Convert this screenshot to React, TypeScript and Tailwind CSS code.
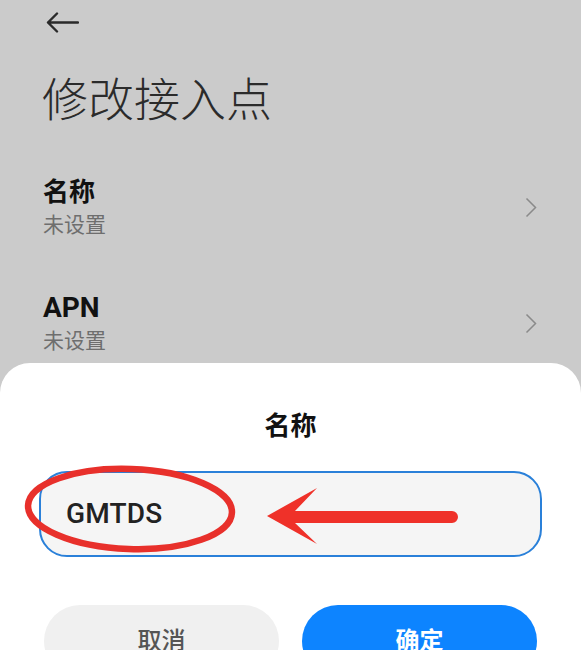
import React from "react";

const font = "font-['Roboto','Noto_Sans_CJK_SC',sans-serif]";

const Chevron = () => (
  <svg width="12" height="21" viewBox="0 0 12 21" fill="none">
    <path d="M1.5 1.5 L10.5 10.5 L1.5 19.5" stroke="#8a8a8a" strokeWidth="1.5" />
  </svg>
);

const ListItem = ({ title, big }: { title: string; big?: boolean }) => (
  <div className="flex items-center justify-between pl-[43px] pr-[44px]">
    <div className="flex flex-col">
      <span
        className={`${big ? "text-[28px] leading-[30px]" : "text-[26px] leading-[30px]"} font-bold text-[#111]`}
      >
        {title}
      </span>
      <span className="text-[21px] leading-[30px] mt-[3px] text-[#6e6e6e]">
        未设置
      </span>
    </div>
    <div className="-mt-[3px]">
      <Chevron />
    </div>
  </div>
);

export default function App() {
  return (
    <div className={`relative h-[650px] w-full overflow-hidden bg-[#cbcbcb] ${font}`}>
      {/* back arrow */}
      <div className="pl-[46px] pt-[12px]">
        <svg width="33" height="21" viewBox="0 0 33 21" fill="none">
          <path
            d="M32 10.5 H2 M11 1.5 L2 10.5 L11 19.5"
            stroke="#2a2a2a"
            strokeWidth="2.4"
            strokeLinecap="round"
            strokeLinejoin="round"
          />
        </svg>
      </div>

      <h1 className="pl-[42px] mt-[40px] text-[46px] leading-[54px] font-extralight text-[#2b2b2b]">
        修改接入点
      </h1>

      <div className="mt-[50px] flex flex-col gap-[53px]">
        <ListItem title="名称" />
        <ListItem title="APN" big />
      </div>

      {/* bottom sheet */}
      <div className="absolute inset-x-0 top-[363px] h-[400px] rounded-t-[30px] bg-white flex flex-col">
        <div className="mt-[48px] text-center text-[26px] leading-[30px] font-semibold text-[#111]">
          名称
        </div>
        <div className="mx-[39px] mt-[30px] h-[86px] rounded-[28px] border-[2.5px] border-[#2a80d9] bg-[#f5f5f5] flex items-center pl-[25px]">
          <span className="text-[28px] font-medium text-[#222] tracking-[0.2px]">GMTDS</span>
        </div>
        <div className="mt-[48px] flex gap-[23px] px-[44px]">
          <button className="flex-1 h-[72px] rounded-full bg-[#f0f0f0] text-[24px] text-[#555] font-medium">
            取消
          </button>
          <button className="flex-1 h-[72px] rounded-full bg-[#0d84ff] text-[24px] text-white font-semibold">
            确定
          </button>
        </div>
      </div>

      {/* red annotation */}
      <svg
        className="pointer-events-none absolute left-0 top-0"
        width="581"
        height="650"
        viewBox="0 0 581 650"
      >
        <ellipse
          cx="130"
          cy="509"
          rx="102"
          ry="40"
          transform="rotate(2 130 509)"
          fill="none"
          stroke="#e8302b"
          strokeWidth="6.5"
        />
        <path
          d="M267 516 L317 488 L295 511 L452 511 A6 6 0 0 1 452 523 L295 523 L317 544 Z"
          fill="#ef3129"
        />
      </svg>
    </div>
  );
}
